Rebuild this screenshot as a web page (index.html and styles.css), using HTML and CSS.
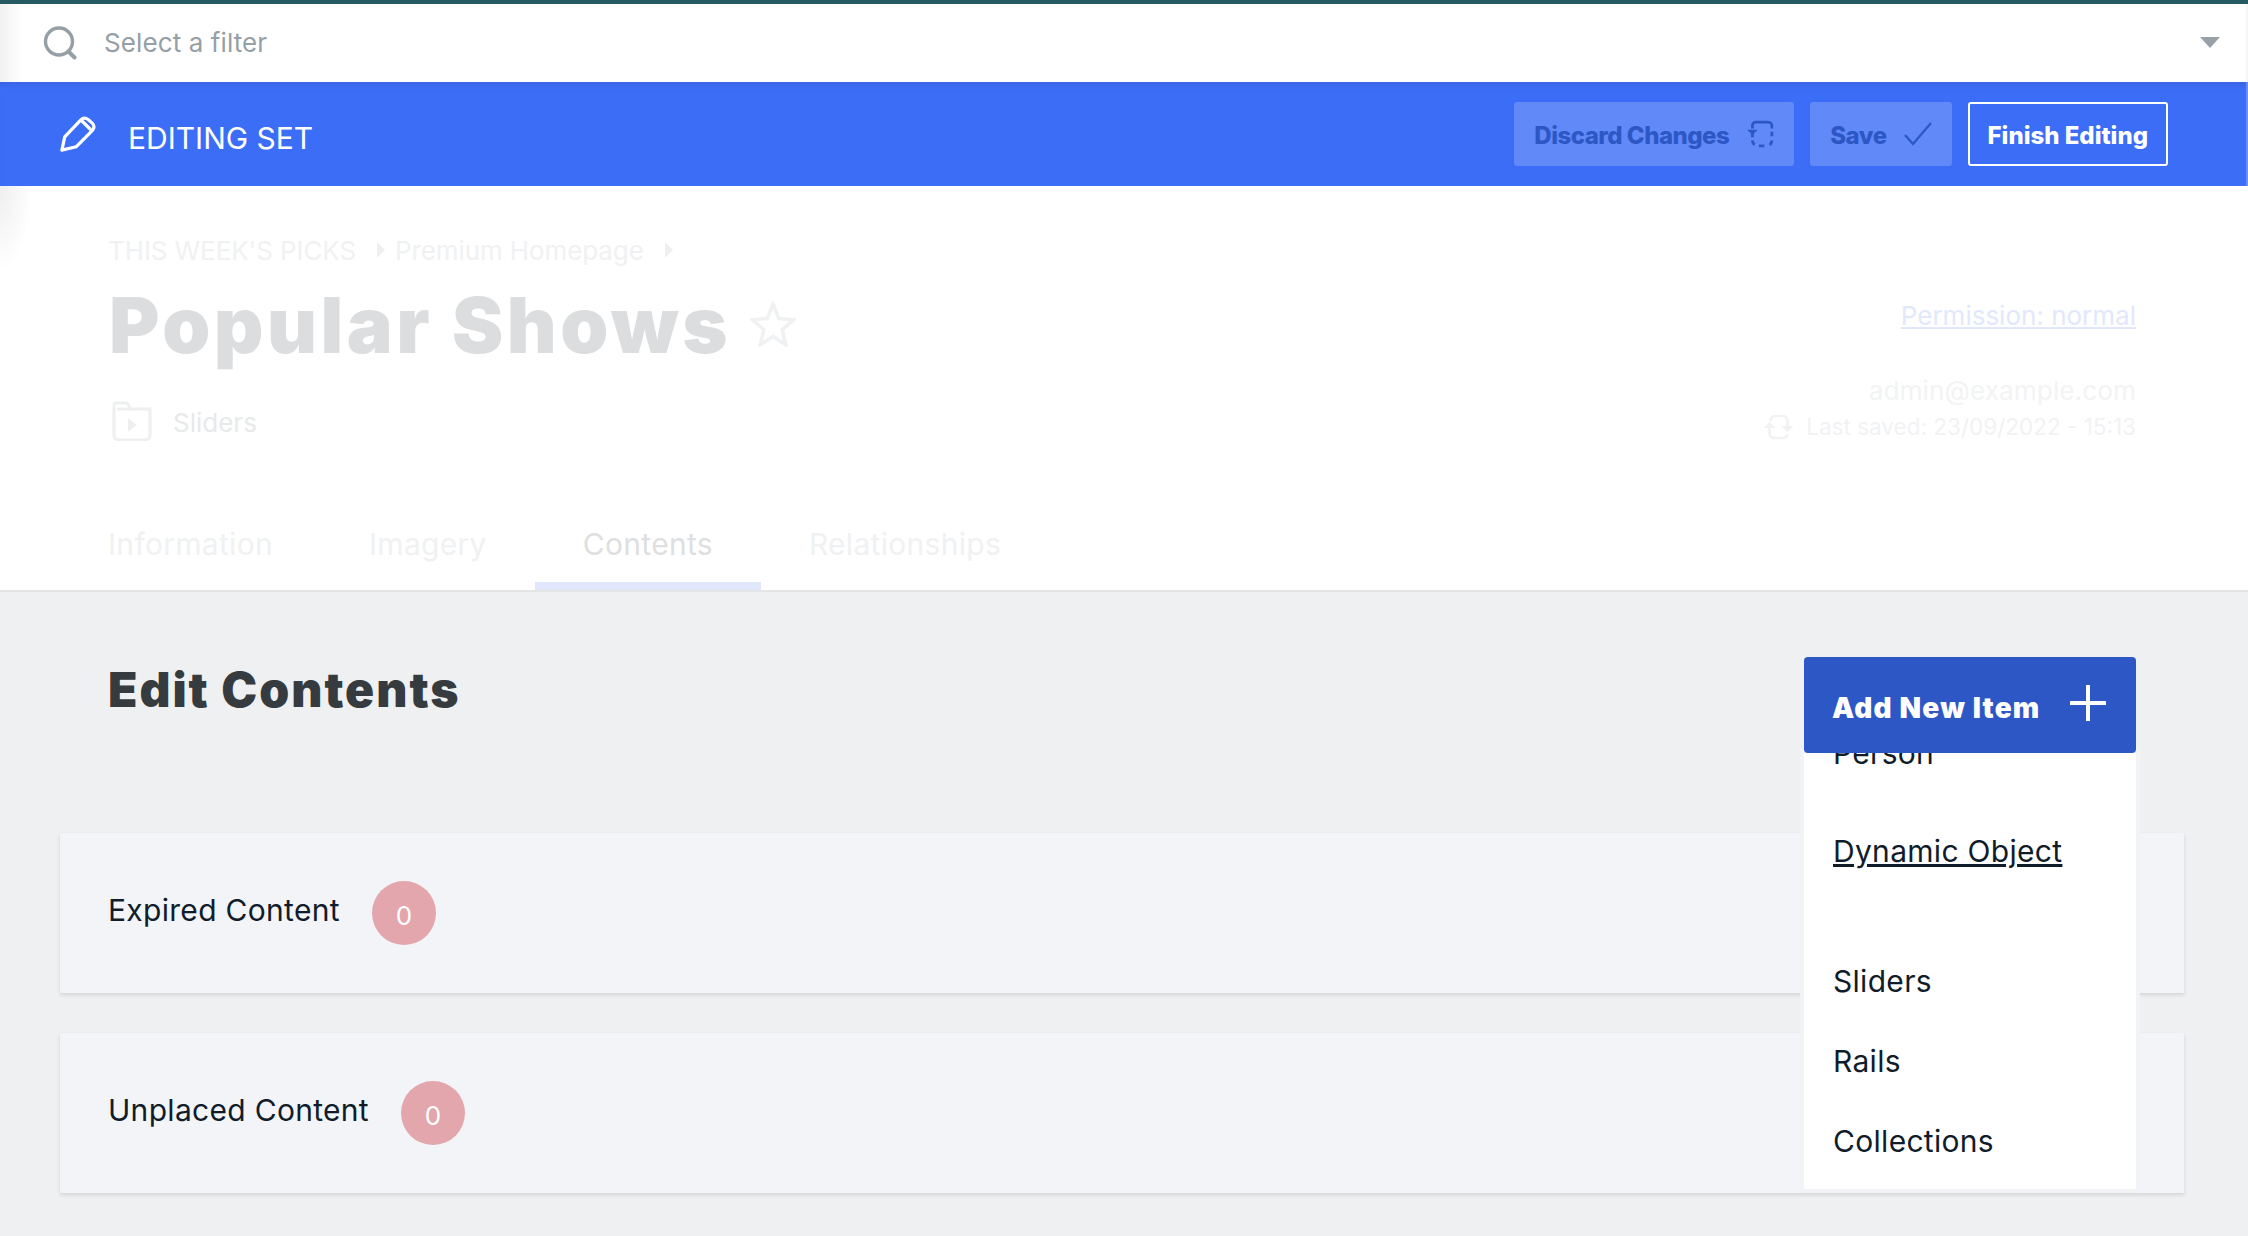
FILE: index.html
```html
<!DOCTYPE html>
<html>
<head>
    <link rel="stylesheet" href="styles.css">
</head>
<body>
    <div class="edge-strip"></div>
    <div class="filter-bar">
        <svg class="search-icon" viewBox="0 0 34 34" fill="none" stroke="#95a0a6" stroke-width="3.4" stroke-linecap="round">
            <circle cx="16" cy="15.5" r="13.5"/>
            <path d="M25.5 25.5l6 6" stroke-width="4"/>
        </svg>
        <span class="filter-text">Select a filter</span>
        <span class="filter-arrow"></span>
    </div>

    <div class="edit-bar">
        <svg class="pencil-icon" viewBox="0 0 38 38" fill="none" stroke="#fff" stroke-width="3.4" stroke-linejoin="round" stroke-linecap="round">
            <path d="M2 36l3-14L22 4c2.500-2.500 5-2.500 8 0l4 3.500c2.500 2.500 2.500 5 0 8L17 32.500z"/>
            <path d="M23 5l9 9"/>
        </svg>
        <span class="edit-title">EDITING SET</span>
        <div class="edit-actions">
            <button class="btn btn-muted">Discard Changes
                <svg class="btn-icon" viewBox="0 1 26 26" fill="none" stroke="#2d57c5" stroke-width="2.600">
                    <path d="M6 9V6c0-2 1.500-3 3-3h11c2 0 4 1 4 3v3"/>
                    <path d="M24 12v4M6 14v3M24 20c0 2-.5 3-2 4M6 20c0 2 .5 3 2 4M12 25h5"/>
                    <path d="M1 10h10l-5 5z" fill="#2d57c5" stroke="none"/>
                </svg>
            </button>
            <button class="btn btn-muted">Save
                <svg class="btn-icon" viewBox="0 0 28 24" fill="none" stroke="#2d57c5" stroke-width="2.200">
                    <path d="M1 13l8 9L27 1"/>
                </svg>
            </button>
            <button class="btn btn-outline">Finish Editing</button>
        </div>
    </div>

    <div class="set-header">
        <div class="header-top">
            <div>
                <div class="crumbs">
                    <span>THIS WEEK'S PICKS</span><i class="crumb-arrow"></i>
                    <span>Premium Homepage</span><i class="crumb-arrow"></i>
                </div>
                <div class="title-row">
                    <h1>Popular Shows</h1>
                    <svg class="star-icon" viewBox="0 0 46 46" fill="none" stroke="#f0f1f2" stroke-width="3.500">
                        <path d="M23 3l5.700 14.500 15 1.200-11.500 10 3.600 15L23 35.500 10.200 43.700l3.600-15-11.500-10 15-1.200z"/>
                    </svg>
                </div>
                <div class="type-row">
                    <svg class="folder-icon" viewBox="0 0 40 40" fill="none" stroke="#eeeff0" stroke-width="3">
                        <path d="M2 8V4c0-1 .5-2 2-2h11l4 6h19v26c0 3-2 5-5 5H7c-3 0-5-2-5-5z"/>
                        <path d="M5 8h14"/>
                        <path d="M16 17l9 7-9 7z" fill="#eeeff0" stroke="none"/>
                    </svg>
                    <span class="type-name">Sliders</span>
                </div>
            </div>
            <div class="header-meta">
                <a class="permission">Permission: normal</a>
                <div class="meta-user">admin@example.com</div>
                <div class="meta-saved">
                    <svg class="sync-icon" viewBox="0 0 30 26" fill="none" stroke="#f1f2f4" stroke-width="2.600">
                        <path d="M7 7c0-3 2-5 5-5h7c3 0 5 2 5 5v5"/>
                        <path d="M24 20c0 3-2 4-5 4h-7c-3 0-6-1-6-5v-6"/>
                        <path d="M0 14h12l-6-6zM18 12h12l-6 6z" fill="#f1f2f4" stroke="none"/>
                    </svg>
                    <span>Last saved: 23/09/2022 - 15:13</span>
                </div>
            </div>
        </div>
        <nav class="tabs">
            <a class="tab">Information</a>
            <a class="tab">Imagery</a>
            <a class="tab tab-active">Contents</a>
            <a class="tab">Relationships</a>
        </nav>
    </div>

    <main class="content">
        <div class="content-head">
            <h2>Edit Contents</h2>
            <div class="add-wrap">
                <button class="add-btn">Add New Item
                    <svg class="plus-icon" viewBox="0 0 36 36" stroke="#fff" stroke-width="4">
                        <path d="M18 0v36M0 18h36"/>
                    </svg>
                </button>
                <div class="add-menu">
                    <div class="menu-scroll">
                        <a class="menu-item menu-person">Person</a>
                        <a class="menu-item menu-dynamic">Dynamic Object</a>
                        <a class="menu-item menu-sliders">Sliders</a>
                        <a class="menu-item">Rails</a>
                        <a class="menu-item">Collections</a>
                    </div>
                </div>
            </div>
        </div>

        <section class="card">
            <span class="card-label">Expired Content</span>
            <span class="count">0</span>
        </section>
        <section class="card">
            <span class="card-label">Unplaced Content</span>
            <span class="count">0</span>
        </section>
    </main>
</body>
</html>
```

FILE: styles.css
```css
* {
    box-sizing: border-box;
}

html,
body {
    margin: 0;
    height: 100%;
}

body {
    position: relative;
    display: flex;
    flex-direction: column;
    overflow: hidden;
    font-family: Inter, "Liberation Sans", sans-serif;
    background-color: #eff0f2;
    color: #111c2b;
}

.edge-strip {
    position: absolute;
    top: 4px;
    right: 0;
    width: 2px;
    height: 182px;
    background-color: rgba(225, 225, 225, 0.3);
}

/* filter bar */
.filter-bar {
    display: flex;
    align-items: center;
    height: 82px;
    padding: 0 28px 0 43px;
    border-top: 4px solid #265a62;
    background: linear-gradient(90deg, #f1f1f1, #fff 22px);
}

.search-icon {
    width: 34px;
    height: 34px;
}

.filter-text {
    margin-left: 27px;
    padding-bottom: 2px;
    font-size: 26px;
    letter-spacing: 0.1px;
    color: #95a0a6;
}

.filter-arrow {
    margin-left: auto;
    margin-bottom: 2px;
    border-top: 11px solid #97a1a7;
    border-left: 10px solid transparent;
    border-right: 10px solid transparent;
}

/* blue bar */
.edit-bar {
    display: flex;
    align-items: center;
    height: 104px;
    padding: 0 80px 0 60px;
    background-color: #3c6df6;
    box-shadow: inset 0 6px 6px -4px rgba(0, 0, 0, 0.1);
}

.pencil-icon {
    width: 36px;
    height: 36px;
}

.edit-title {
    margin-left: 32px;
    padding-top: 8px;
    font-size: 30px;
    color: #fff;
}

.edit-actions {
    display: flex;
    gap: 16px;
    margin-left: auto;
}

.btn {
    display: flex;
    align-items: center;
    height: 64px;
    padding: 2px 20px 0;
    border: 0;
    border-radius: 3px;
    font-family: inherit;
    font-size: 24px;
    font-weight: 800;
}

.btn-muted {
    gap: 17px;
    letter-spacing: -0.5px;
    background-color: #6189f8;
    color: #2d57c5;
}

.btn-outline {
    padding: 2px 18px 0;
    border: 2px solid #fff;
    background-color: transparent;
    color: #fff;
}

.btn-icon {
    width: 28px;
    height: 28px;
    margin-bottom: 3px;
}

/* set header, all faded while editing */
.set-header {
    height: 406px;
    padding: 0 112px 0 60px;
    display: flex;
    flex-direction: column;
    background: radial-gradient(ellipse 32px 85px at 0 0, #eeeeee, #fff) no-repeat #fff;
    border-bottom: 2px solid #e3e4e6;
}

.header-top {
    display: flex;
    justify-content: space-between;
    height: 306px;
    padding: 47px 0 0 48px;
}

.crumbs {
    display: flex;
    align-items: center;
    height: 34px;
    font-size: 26px;
    letter-spacing: -0.1px;
    color: #f0f1f2;
}

.crumb-arrow {
    margin: 0 10px 0 21px;
    border-left: 8px solid #eeeff0;
    border-top: 8px solid transparent;
    border-bottom: 8px solid transparent;
}

.title-row {
    display: flex;
    align-items: center;
    gap: 19px;
    margin-top: 13px;
}

h1 {
    margin: 0 0 0 1px;
    font-size: 77px;
    line-height: 90px;
    font-weight: 900;
    letter-spacing: 3.5px;
    color: #dcddde;
}

.star-icon {
    width: 46px;
    height: 46px;
    margin-bottom: 2px;
}

.type-row {
    display: flex;
    align-items: center;
    gap: 21px;
    margin-top: 31px;
    margin-left: 4px;
    font-size: 26px;
    color: #e8e9ea;
}

.type-name {
    padding-top: 2px;
}

.folder-icon {
    width: 40px;
    height: 40px;
}

.header-meta {
    display: flex;
    flex-direction: column;
    align-items: flex-end;
    padding-top: 65px;
}

.permission {
    font-size: 26px;
    line-height: 36px;
    color: #e2e8fc;
    text-decoration: underline;
}

.meta-user {
    margin-top: 39px;
    font-size: 26.3px;
    line-height: 36px;
    color: #f2f3f4;
}

.meta-saved {
    display: flex;
    align-items: center;
    gap: 12px;
    margin-top: 1px;
    font-size: 22.5px;
    line-height: 34px;
    color: #f1f2f4;
}

.sync-icon {
    width: 31px;
    height: 26px;
}

.tabs {
    display: flex;
    flex: 1;
}

.tab {
    display: flex;
    align-items: center;
    padding: 6px 48px 0;
    font-size: 30px;
    letter-spacing: 0.3px;
    color: #f0f1f2;
}

.tab-active {
    padding-top: 14px;
    border-bottom: 8px solid #e0e6fb;
    color: #dedfe0;
}

/* contents */
.content {
    flex: 1;
    padding: 0 64px 0 60px;
}

.content-head {
    display: flex;
    justify-content: space-between;
    height: 241px;
    padding: 65px 48px 0;
}

h2 {
    margin: 4px 0 0;
    font-size: 48px;
    line-height: 58px;
    font-weight: 900;
    letter-spacing: 2px;
    color: #363b3f;
}

.add-wrap {
    position: relative;
    z-index: 2;
    width: 332px;
}

.add-btn {
    position: relative;
    z-index: 1;
    display: flex;
    align-items: center;
    justify-content: space-between;
    width: 100%;
    height: 96px;
    padding: 6px 30px 0 28px;
    border: 0;
    border-radius: 4px;
    font-family: inherit;
    font-size: 28px;
    font-weight: 900;
    letter-spacing: 1.2px;
    color: #fff;
    background-color: #2d57c5;
}

.plus-icon {
    width: 36px;
    height: 36px;
    margin-bottom: 10px;
}

.add-menu {
    position: absolute;
    top: 96px;
    left: 0;
    width: 332px;
    height: 436px;
    overflow: hidden;
    background-color: #fff;
    box-shadow: 0 0 0 4px #f2f3f7;
}

.menu-scroll {
    display: flex;
    flex-direction: column;
    margin-top: -31px;
    padding-left: 29px;
}

.menu-item {
    height: 80px;
    line-height: 42px;
    padding-top: 10px;
    font-size: 30px;
    letter-spacing: 0.3px;
}

.menu-dynamic {
    height: 130px;
    text-decoration: underline;
}

.menu-person {
    height: 98px;
}

.card {
    display: flex;
    align-items: center;
    gap: 32px;
    height: 160px;
    margin-bottom: 40px;
    padding-left: 48px;
    background-color: #f2f4f8;
    box-shadow: 0 2px 4px rgba(0, 0, 0, 0.12);
}

.card-label {
    padding-bottom: 6px;
    font-size: 30px;
    letter-spacing: 0.3px;
}

.count {
    display: flex;
    align-items: center;
    justify-content: center;
    width: 64px;
    height: 64px;
    padding-top: 5px;
    border-radius: 50%;
    font-size: 26px;
    color: #fff;
    background-color: #e3a6ac;
}
```
